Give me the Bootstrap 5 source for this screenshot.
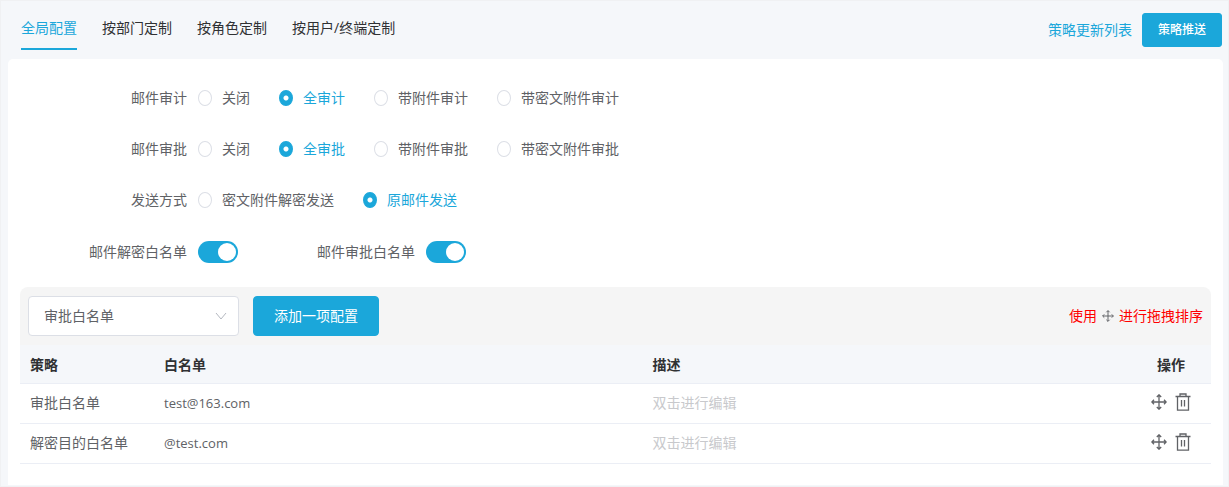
<!DOCTYPE html>
<html lang="zh-CN">
<head>
<meta charset="utf-8">
<meta name="viewport" content="width=device-width, initial-scale=1">
<title>全局配置</title>
<link href="https://cdn.jsdelivr.net/npm/bootstrap@5.3.0/dist/css/bootstrap.min.css" rel="stylesheet">
<style>
:root { --brand: #1ba7da; --ink: #606266; --ink-strong: #303133; --line: #ebeef5; }
body { font: 14px/20px "Open Sans", "Noto Sans CJK SC", sans-serif; color: var(--ink); background: #f5f7fa; }
.page-frame { min-height: 100vh; border: 1px solid #f0f1f3; padding: 0 5px 0 7px; }
.top-bar { height: 58px; padding: 0 1px 0 13px; }
.scope-tabs { gap: 25px; }
.scope-tabs .nav-link { padding: 17px 0 10px; color: var(--ink-strong); border-bottom: 2px solid transparent; }
.scope-tabs .nav-link.active { color: var(--brand); border-color: var(--brand); }
.top-actions { gap: 10px; }
.list-link { color: var(--brand); text-decoration: none; }
.btn-brand { --bs-btn-color: #fff; --bs-btn-bg: var(--brand); --bs-btn-border-color: var(--brand); --bs-btn-hover-color: #fff; --bs-btn-hover-bg: #3bb6e2; --bs-btn-hover-border-color: #3bb6e2; --bs-btn-border-radius: 4px; --bs-btn-font-size: 14px; --bs-btn-line-height: 20px; --bs-btn-padding-x: 20px; --bs-btn-padding-y: 9px; }
.btn-push { --bs-btn-font-size: 12px; --bs-btn-padding-x: 15px; --bs-btn-padding-y: 6px; --bs-btn-border-radius: 3px; --bs-btn-font-weight: 500; }
.main-panel { background: #fff; border-radius: 5px 5px 0 0; padding: 29px 12px 21px; }
.settings { display: grid; gap: 31px; padding-bottom: 24px; }
.field-row { display: flex; align-items: center; }
.field-name { width: 167px; text-align: right; margin-right: 11px; }
.choices { display: flex; flex-wrap: wrap; gap: 29px; }
.choice { display: flex; align-items: center; gap: 10px; }
.choice .form-check-input { width: 14px; height: 16px; margin: 0; border-color: #dcdfe6; border-radius: 50%; box-shadow: none; }
.choice .form-check-input:checked { border-color: var(--brand); background: radial-gradient(circle, #fff 2px, var(--brand) 3px); }
.choice .form-check-input:checked + label { color: var(--brand); }
.toggle.form-check-input { width: 40px; height: 22px; margin: 0; border: 0; border-radius: 11px; }
.toggle.form-check-input:checked { background-color: var(--brand); background-size: 24px 24px; background-position: right -1px center; }
.second-name { margin: 0 11px 0 79px; }
.tool-bar { background: #f5f5f5; border-radius: 8px 8px 0 0; padding: 9px 8px; }
.type-select.form-select { width: 211px; height: 40px; margin-right: 14px; padding: 0 36px 2px 15px; font-size: 14px; color: var(--ink); border-color: #dcdfe6; border-radius: 4px; background-image: url("data:image/svg+xml,%3csvg xmlns='http://www.w3.org/2000/svg' viewBox='0 0 12 12'%3e%3cpath fill='none' stroke='%23b4b8c0' d='M1 3l5 6 5-6'/%3e%3c/svg%3e"); background-size: 12px 12px; background-position: right 11px center; }
.drag-hint { color: #f00; gap: 5px; }
.glyph { fill: none; stroke: var(--ink); stroke-width: 1.3; display: block; }
.rule-table { table-layout: fixed; --bs-table-color: var(--ink); border-color: var(--line); }
.rule-table > :not(caption) > * > * { padding: 9px 10px 10px; height: 40px; line-height: 20px; vertical-align: middle; }
.rule-table > thead > tr > th { background: #f5f7fa; color: var(--ink-strong); font-weight: 700; height: 38px; padding: 10px 10px 8px; }
.col-kind { width: 134px; }
.col-ops { width: 80px; }
.rule-table td.mail-cell { font-size: 13px; }
.rule-table td.hint-cell { color: #c8c9cc; }
.rule-table > tbody > tr > td.ops-cell { padding: 0 0 4px; }
.icon-btn { border: 0; background: none; padding: 0; }
</style>
</head>
<body>
<svg width="0" height="0" class="position-absolute" aria-hidden="true">
  <symbol id="i-move" viewBox="0 0 16 16"><path d="M8 1v14M1 8h14M5.800 3L8 .8 10.200 3M5.800 13L8 15.200 10.200 13M3 5.800L.8 8 3 10.200M13 5.800L15.200 8 13 10.200"/></symbol>
  <symbol id="i-trash" viewBox="0 0 16 18"><path d="M.5 3.500h15M5 3.500V1h6v2.500M2.500 3.500v13.700h11V3.500M6.500 7v6.500M9.500 7v6.500"/></symbol>
</svg>
<div class="page-frame">
  <header class="top-bar d-flex justify-content-between">
    <ul class="nav scope-tabs align-self-start">
      <li class="nav-item"><a class="nav-link active" href="#">全局配置</a></li>
      <li class="nav-item"><a class="nav-link" href="#">按部门定制</a></li>
      <li class="nav-item"><a class="nav-link" href="#">按角色定制</a></li>
      <li class="nav-item"><a class="nav-link" href="#">按用户/终端定制</a></li>
    </ul>
    <div class="top-actions d-flex align-items-center">
      <a class="list-link" href="#">策略更新列表</a>
      <button type="button" class="btn btn-brand btn-push">策略推送</button>
    </div>
  </header>
  <main class="main-panel">
    <form class="settings">
      <div class="field-row" role="radiogroup" aria-labelledby="n-audit">
        <span class="field-name" id="n-audit">邮件审计</span>
        <div class="choices">
          <div class="choice"><input class="form-check-input" type="radio" name="audit" id="a1"><label for="a1">关闭</label></div>
          <div class="choice"><input class="form-check-input" type="radio" name="audit" id="a2" checked><label for="a2">全审计</label></div>
          <div class="choice"><input class="form-check-input" type="radio" name="audit" id="a3"><label for="a3">带附件审计</label></div>
          <div class="choice"><input class="form-check-input" type="radio" name="audit" id="a4"><label for="a4">带密文附件审计</label></div>
        </div>
      </div>
      <div class="field-row" role="radiogroup" aria-labelledby="n-approve">
        <span class="field-name" id="n-approve">邮件审批</span>
        <div class="choices">
          <div class="choice"><input class="form-check-input" type="radio" name="approve" id="p1"><label for="p1">关闭</label></div>
          <div class="choice"><input class="form-check-input" type="radio" name="approve" id="p2" checked><label for="p2">全审批</label></div>
          <div class="choice"><input class="form-check-input" type="radio" name="approve" id="p3"><label for="p3">带附件审批</label></div>
          <div class="choice"><input class="form-check-input" type="radio" name="approve" id="p4"><label for="p4">带密文附件审批</label></div>
        </div>
      </div>
      <div class="field-row" role="radiogroup" aria-labelledby="n-send">
        <span class="field-name" id="n-send">发送方式</span>
        <div class="choices">
          <div class="choice"><input class="form-check-input" type="radio" name="send" id="s1"><label for="s1">密文附件解密发送</label></div>
          <div class="choice"><input class="form-check-input" type="radio" name="send" id="s2" checked><label for="s2">原邮件发送</label></div>
        </div>
      </div>
      <div class="field-row form-switch p-0">
        <label class="field-name" for="w1">邮件解密白名单</label>
        <input class="form-check-input toggle" type="checkbox" role="switch" id="w1" checked>
        <label class="second-name" for="w2">邮件审批白名单</label>
        <input class="form-check-input toggle" type="checkbox" role="switch" id="w2" checked>
      </div>
    </form>
    <section>
      <div class="tool-bar d-flex align-items-center">
        <select class="form-select type-select" aria-label="白名单"><option>审批白名单</option><option>解密目的白名单</option></select>
        <button type="button" class="btn btn-brand">添加一项配置</button>
        <div class="drag-hint d-flex align-items-center ms-auto"><span>使用</span><svg class="glyph" width="12" height="12" aria-hidden="true"><use href="#i-move"/></svg><span>进行拖拽排序</span></div>
      </div>
      <table class="table rule-table mb-0">
        <colgroup><col class="col-kind"><col><col><col class="col-ops"></colgroup>
        <thead><tr><th scope="col">策略</th><th scope="col">白名单</th><th scope="col">描述</th><th scope="col" class="text-center">操作</th></tr></thead>
        <tbody>
          <tr><td>审批白名单</td><td class="mail-cell">test@163.com</td><td class="hint-cell">双击进行编辑</td>
            <td class="ops-cell"><div class="d-flex justify-content-center align-items-center gap-2"><button type="button" class="icon-btn" aria-label="拖拽"><svg class="glyph" width="16" height="16"><use href="#i-move"/></svg></button><button type="button" class="icon-btn" aria-label="删除"><svg class="glyph" width="16" height="18"><use href="#i-trash"/></svg></button></div></td></tr>
          <tr><td>解密目的白名单</td><td class="mail-cell">@test.com</td><td class="hint-cell">双击进行编辑</td>
            <td class="ops-cell"><div class="d-flex justify-content-center align-items-center gap-2"><button type="button" class="icon-btn" aria-label="拖拽"><svg class="glyph" width="16" height="16"><use href="#i-move"/></svg></button><button type="button" class="icon-btn" aria-label="删除"><svg class="glyph" width="16" height="18"><use href="#i-trash"/></svg></button></div></td></tr>
        </tbody>
      </table>
    </section>
  </main>
</div>
<script src="https://cdn.jsdelivr.net/npm/bootstrap@5.3.0/dist/js/bootstrap.bundle.min.js"></script>
</body>
</html>
